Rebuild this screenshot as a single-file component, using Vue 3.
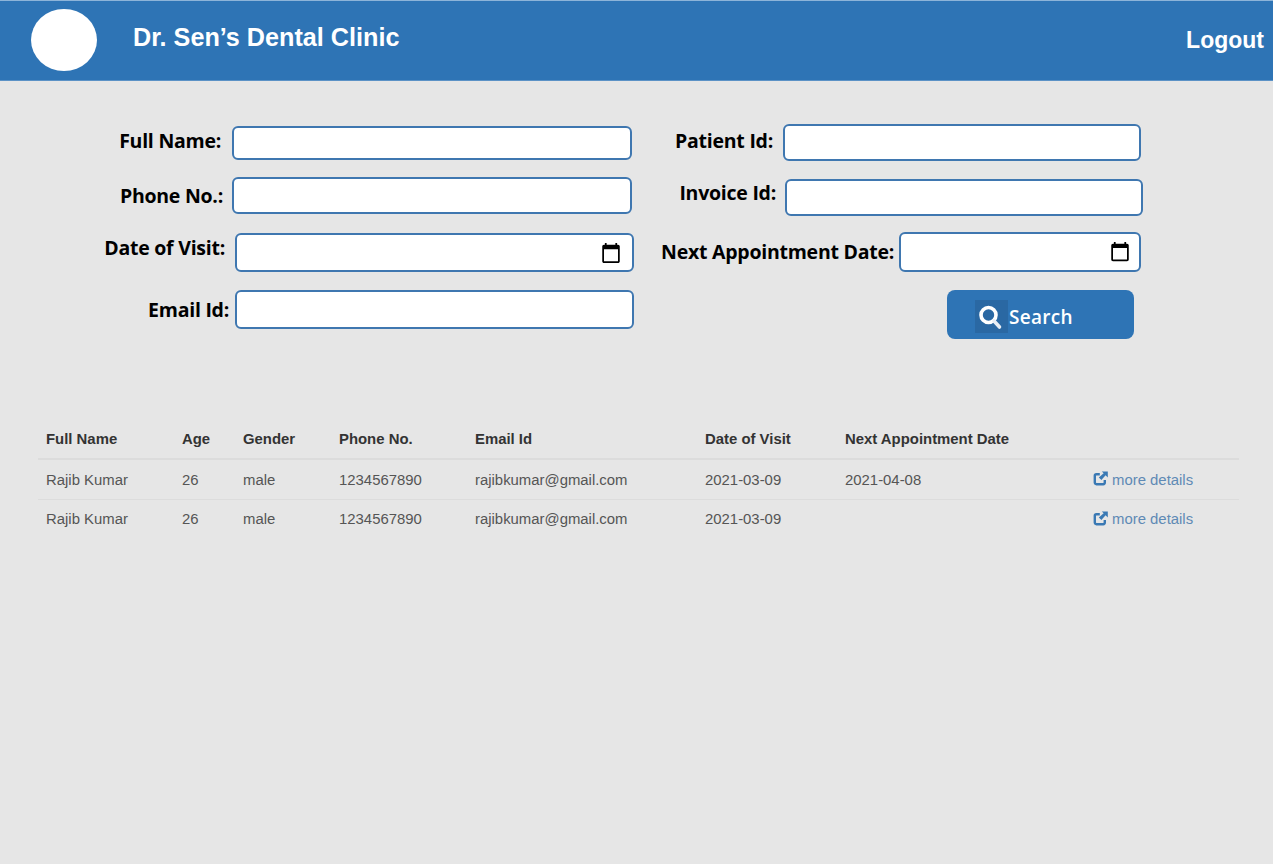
<script setup>
const columns = ['Full Name', 'Age', 'Gender', 'Phone No.', 'Email Id', 'Date of Visit', 'Next Appointment Date', '']
const patients = [
  { name: 'Rajib Kumar', age: 26, gender: 'male', phone: '1234567890', email: 'rajibkumar@gmail.com', visit: '2021-03-09', next: '2021-04-08' },
  { name: 'Rajib Kumar', age: 26, gender: 'male', phone: '1234567890', email: 'rajibkumar@gmail.com', visit: '2021-03-09', next: '' }
]
</script>

<template>
  <div class="page">
    <header class="topbar">
      <div class="logo"></div>
      <h1 class="title">Dr. Sen’s Dental Clinic</h1>
      <a class="logout">Logout</a>
    </header>

    <form class="form" @submit.prevent>
      <div class="col col-left">
        <div class="row l1"><label>Full Name:</label><input type="text" /></div>
        <div class="row l2"><label>Phone No.:</label><input type="text" /></div>
        <div class="row l3"><label>Date of Visit:</label><input type="date" /></div>
        <div class="row l4"><label>Email Id:</label><input type="text" /></div>
      </div>
      <div class="col col-right">
        <div class="row r1"><label>Patient Id:</label><input type="text" /></div>
        <div class="row r2"><label>Invoice Id:</label><input type="text" /></div>
        <div class="row r3"><label>Next Appointment Date:</label><input type="date" /></div>
        <div class="row r4">
          <button class="search" type="submit">
            <span class="search-icon">
              <svg width="33" height="33" viewBox="0 0 33 33" fill="none">
                <circle cx="13.5" cy="15" r="7.5" stroke="#fff" stroke-width="3.6" />
                <path d="M19 21l5.5 6" stroke="#e8eef5" stroke-width="3.6" stroke-linecap="round" />
              </svg>
            </span>
            <span class="search-text">Search</span>
          </button>
        </div>
      </div>
    </form>

    <table class="grid">
      <colgroup>
        <col class="c1" /><col class="c2" /><col class="c3" /><col class="c4" />
        <col class="c5" /><col class="c6" /><col class="c7" /><col class="c8" />
      </colgroup>
      <thead>
        <tr><th v-for="(c, i) in columns" :key="i">{{ c }}</th></tr>
      </thead>
      <tbody>
        <tr v-for="(p, i) in patients" :key="i">
          <td>{{ p.name }}</td>
          <td>{{ p.age }}</td>
          <td>{{ p.gender }}</td>
          <td>{{ p.phone }}</td>
          <td>{{ p.email }}</td>
          <td>{{ p.visit }}</td>
          <td>{{ p.next }}</td>
          <td>
            <a class="more">
              <svg class="share" width="15" height="15" viewBox="0 0 15 15" fill="none">
                <path d="M11.8 9v2.6c0 1-.7 1.6-1.6 1.6H3.4c-1 0-1.6-.7-1.6-1.6V4.8c0-1 .7-1.6 1.6-1.6h3.4" stroke="#3a79b4" stroke-width="2.4" />
                <path d="M8.8 0.4H14.8V6.4L12.6 4.2 8.4 9 5.8 6.6 10.7 2.3z" fill="#3a79b4" />
              </svg>
              <span>more details</span>
            </a>
          </td>
        </tr>
      </tbody>
    </table>
  </div>
</template>

<style>
html, body { margin: 0; background: #e6e6e6; }
</style>

<style scoped>
.page {
  min-height: 864px;
  background: #e6e6e6;
  font-family: "Liberation Sans", Arial, sans-serif;
  overflow: hidden;
}
.topbar {
  box-sizing: border-box;
  height: 81px;
  background: #2e74b5;
  border-top: 1px solid #8db4d9;
  border-bottom: 1px solid #5c92c6;
  display: flex;
  align-items: flex-start;
  color: #fff;
}
.logo {
  width: 66px;
  height: 62px;
  margin: 8px 0 0 31px;
  border-radius: 50%;
  background: #fff;
  flex: none;
}
.title {
  margin: 21px 0 0 36px;
  font-size: 25.2px;
  line-height: 30px;
  font-weight: 700;
  white-space: nowrap;
}
.logout {
  margin: 24px 9px 0 auto;
  font-size: 23px;
  line-height: 30px;
  font-weight: 700;
}

.form {
  display: flex;
  align-items: flex-start;
  font-family: "Open Sans", Arial, sans-serif;
}
.col { display: flex; flex-direction: column; flex: none; }
.col-left { width: 634px; margin-top: 45px; }
.col-right { width: 509px; margin-top: 43px; }
.row { display: flex; justify-content: flex-end; align-items: center; }
label {
  color: #000;
  font-size: 19.5px;
  font-weight: 700;
  letter-spacing: -0.25px;
  line-height: 26px;
  white-space: nowrap;
}
input {
  box-sizing: border-box;
  flex: none;
  margin: 0;
  padding: 0 10px;
  background: #fff;
  border: 2px solid #3f77b0;
  border-radius: 6px;
  outline: none;
  font-size: 16px;
  color: transparent;
}
input::-webkit-datetime-edit { visibility: hidden; }
input::-webkit-calendar-picker-indicator {
  width: 22px;
  height: 22px;
  padding: 0;
  margin: 0 0 0 0;
}
.r3 input::-webkit-calendar-picker-indicator { margin-right: -2px; }

.l1 { padding-right: 2px; }
.l1 input { width: 400px; height: 34px; }
.l1 label { margin: 0 11px 4px 0; }
.l2 { padding-right: 2px; margin-top: 17px; }
.l2 input { width: 400px; height: 37px; }
.l2 label { margin: 0 9px 0 0; }
.l3 { margin-top: 19px; }
.l3 input { width: 399px; height: 39px; }
.l3 label { margin: 0 10px 10px 0; }
.l4 { margin-top: 18px; }
.l4 input { width: 399px; height: 39px; }
.l4 label { margin: 0 6px 0 0; }

.r1 { padding-right: 2px; }
.r1 input { width: 358px; height: 37px; }
.r1 label { margin: 0 10px 4px 0; }
.r2 { margin-top: 18px; }
.r2 input { width: 358px; height: 37px; }
.r2 label { margin: 0 9px 10px 0; }
.r3 { padding-right: 2px; margin-top: 16px; }
.r3 input { width: 242px; height: 40px; }
.r3 label { margin: 0 5px 0 0; }
.r4 { padding-right: 9px; margin-top: 18px; }

.search {
  box-sizing: border-box;
  width: 187px;
  height: 49px;
  padding: 10px 0 0 28px;
  border: 0;
  border-radius: 8px;
  background: #2e74b5;
  color: #fff;
  display: flex;
  align-items: flex-start;
  font-family: "Open Sans", Arial, sans-serif;
}
.search-icon {
  width: 33px;
  height: 33px;
  background: #2a68a3;
  flex: none;
}
.search-icon svg { display: block; }
.search-text {
  margin: 1px 0 0 1px;
  font-size: 19px;
  font-weight: 600;
  letter-spacing: 0.3px;
  line-height: 33px;
}

.grid {
  box-sizing: border-box;
  width: 1201px;
  margin: 81px 0 0 38px;
  border-collapse: collapse;
  table-layout: fixed;
  font-size: 14.9px;
  line-height: 20px;
  color: #555;
}
.c1 { width: 136px; }
.c2 { width: 61px; }
.c3 { width: 96px; }
.c4 { width: 136px; }
.c5 { width: 230px; }
.c6 { width: 140px; }
.c7 { width: 248px; }
.c8 { width: 154px; }
th {
  height: 38px;
  padding: 0 8px;
  text-align: left;
  font-weight: 700;
  color: #333;
  border-bottom: 2px solid #dcdcdc;
  white-space: nowrap;
}
td {
  box-sizing: border-box;
  height: 39px;
  padding: 1px 8px 0;
  white-space: nowrap;
}
tbody tr:first-child td { height: 40px; }
tbody tr + tr td { border-top: 1px solid #dcdcdc; }
.more { display: flex; align-items: center; color: #5f8ab5; }
.share { flex: none; margin-right: 4px; margin-top: -2px; }
</style>
